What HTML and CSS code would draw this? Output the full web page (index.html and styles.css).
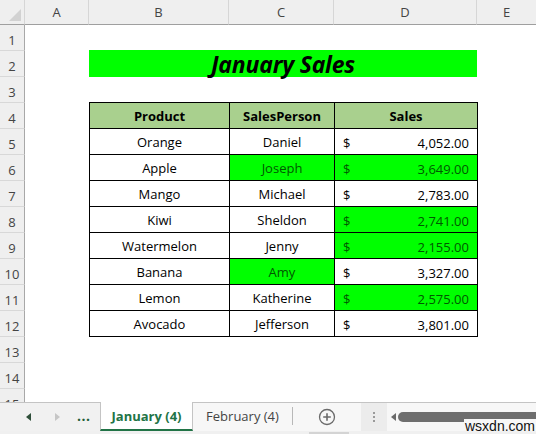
FILE: index.html
```html
<!DOCTYPE html>
<html>
<head>
<meta charset="utf-8">
<link rel="stylesheet" href="styles.css">
</head>
<body>
<div class="app">
  <div class="sheet">
    <div class="corner"><span class="tri"></span></div>
    <div class="colhead">A</div>
    <div class="colhead">B</div>
    <div class="colhead">C</div>
    <div class="colhead">D</div>
    <div class="colhead last">E</div>

    <div class="rowhead r1">1</div>
    <div class="rowhead r2">2</div>
    <div class="rowhead r3">3</div>
    <div class="rowhead r4">4</div>
    <div class="rowhead r5">5</div>
    <div class="rowhead r6">6</div>
    <div class="rowhead r7">7</div>
    <div class="rowhead r8">8</div>
    <div class="rowhead r9">9</div>
    <div class="rowhead r10">10</div>
    <div class="rowhead r11">11</div>
    <div class="rowhead r12">12</div>
    <div class="rowhead r13">13</div>
    <div class="rowhead r14">14</div>
    <div class="rowhead r15">15</div>

    <div class="title">January Sales</div>

    <table class="data">
      <colgroup><col class="cb"><col class="cc"><col class="cd"></colgroup>
      <thead>
        <tr><th>Product</th><th>SalesPerson</th><th>Sales</th></tr>
      </thead>
      <tbody>
        <tr><td>Orange</td><td>Daniel</td><td><div class="money"><span>$</span><span>4,052.00</span></div></td></tr>
        <tr><td>Apple</td><td class="hl">Joseph</td><td class="hl"><div class="money"><span>$</span><span>3,649.00</span></div></td></tr>
        <tr><td>Mango</td><td>Michael</td><td><div class="money"><span>$</span><span>2,783.00</span></div></td></tr>
        <tr><td>Kiwi</td><td>Sheldon</td><td class="hl"><div class="money"><span>$</span><span>2,741.00</span></div></td></tr>
        <tr><td>Watermelon</td><td>Jenny</td><td class="hl"><div class="money"><span>$</span><span>2,155.00</span></div></td></tr>
        <tr><td>Banana</td><td class="hl">Amy</td><td><div class="money"><span>$</span><span>3,327.00</span></div></td></tr>
        <tr><td>Lemon</td><td>Katherine</td><td class="hl"><div class="money"><span>$</span><span>2,575.00</span></div></td></tr>
        <tr><td>Avocado</td><td>Jefferson</td><td><div class="money"><span>$</span><span>3,801.00</span></div></td></tr>
      </tbody>
    </table>
  </div>

  <div class="tabbar">
    <div class="nav">
      <span class="arrow-left"></span>
      <span class="arrow-right"></span>
      <span class="dots">...</span>
    </div>
    <div class="tab active">January (4)</div>
    <div class="tab">February (4)</div>
    <div class="sep"></div>
    <div class="add">
      <svg width="18" height="18" viewBox="0 0 18 18"><circle cx="9" cy="9" r="7.5" fill="none" stroke="#6a6a6a" stroke-width="1.3"/><path d="M9 5.2v7.6M5.2 9h7.6" stroke="#6a6a6a" stroke-width="1.6"/></svg>
    </div>
    <div class="grip"><span></span><span></span><span></span></div>
    <div class="hscroll">
      <span class="sarrow"></span>
      <span class="thumb"></span>
    </div>
    <div class="watermark">wsxdn.com</div>
  </div>
  <div class="bottomstrip"><span class="seg"></span></div>
</div>
</body>
</html>
```

FILE: styles.css
```css
html, body {
  margin: 0;
  padding: 0;
  background: #ffffff;
}

.app {
  width: 536px;
  height: 434px;
  overflow: hidden;
  position: relative;
  font-family: "Open Sans", "Noto Sans", sans-serif;
}

.sheet {
  height: 402px;
  overflow: hidden;
  display: grid;
  grid-template-columns: 25px 64px 140px 105px 143px 59px;
  grid-template-rows: 25px repeat(15, 26px);
  background: #ffffff;
}

.corner {
  grid-column: 1;
  grid-row: 1;
  background: #efefef;
  border-right: 1px solid #d6d6d6;
  border-bottom: 1px solid #9f9f9f;
  position: relative;
}

.tri {
  position: absolute;
  right: 3px;
  bottom: 3px;
  width: 0;
  height: 0;
  border-left: 12px solid transparent;
  border-bottom: 12px solid #d2d2d2;
}

.colhead {
  grid-row: 1;
  background: #efefef;
  border-right: 1px solid #d6d6d6;
  border-bottom: 1px solid #9f9f9f;
  color: #444;
  font-size: 13px;
  display: flex;
  align-items: center;
  justify-content: center;
}

.colhead.last {
  border-right: none;
}

.rowhead {
  grid-column: 1;
  background: #efefef;
  border-right: 1px solid #a8a8a8;
  border-bottom: 1px solid #d8d8d8;
  color: #444;
  font-size: 13px;
  display: flex;
  align-items: center;
  justify-content: center;
  padding-top: 5px;
  box-sizing: border-box;
}

.r1 { grid-row: 2; }
.r2 { grid-row: 3; }
.r3 { grid-row: 4; }
.r4 { grid-row: 5; }
.r5 { grid-row: 6; }
.r6 { grid-row: 7; }
.r7 { grid-row: 8; }
.r8 { grid-row: 9; }
.r9 { grid-row: 10; }
.r10 { grid-row: 11; }
.r11 { grid-row: 12; }
.r12 { grid-row: 13; }
.r13 { grid-row: 14; }
.r14 { grid-row: 15; }
.r15 { grid-row: 16; }

.title {
  grid-column: 3 / 6;
  grid-row: 3;
  background: #00ff00;
  font-family: "Open Sans", sans-serif;
  font-weight: 700;
  font-style: italic;
  font-size: 23px;
  letter-spacing: -0.2px;
  color: #000;
  display: flex;
  align-items: center;
  justify-content: center;
  margin-top: -1px;
  padding-top: 1px;
  box-sizing: border-box;
}

.data {
  grid-column: 3 / 6;
  grid-row: 5 / 14;
  align-self: start;
  margin-top: -1px;
  width: 389px;
  border-collapse: collapse;
  table-layout: fixed;
  font-family: "Open Sans", sans-serif;
  font-size: 13px;
  color: #000;
}

.cb { width: 140px; }
.cc { width: 105px; }
.cd { width: 143px; }

.data th,
.data td {
  border: 1px solid #000;
  height: 26px;
  padding: 0;
  text-align: center;
  vertical-align: middle;
  line-height: 16px;
  box-sizing: border-box;
}

.data th {
  background: #a9d08e;
  font-weight: 700;
}

.data td.hl {
  background: #00ff00;
  color: #005800;
}

.money {
  display: flex;
  justify-content: space-between;
  padding: 2px 8px 0 8px;
}

.tabbar {
  height: 28px;
  display: flex;
  align-items: stretch;
  background: #f7f7f7;
  border-top: 1px solid #c4c4c4;
  position: relative;
  font-family: "Open Sans", sans-serif;
  font-size: 13px;
}

.nav {
  width: 100px;
  display: flex;
  align-items: center;
  background: #f1f1f1;
  position: relative;
}

.arrow-left {
  margin-left: 26px;
  width: 0;
  height: 0;
  border-top: 4px solid transparent;
  border-bottom: 4px solid transparent;
  border-right: 5px solid #2f4f3a;
}

.arrow-right {
  margin-left: 24px;
  width: 0;
  height: 0;
  border-top: 4px solid transparent;
  border-bottom: 4px solid transparent;
  border-left: 5px solid #c6c6c6;
}

.dots {
  margin-left: 17px;
  font-weight: 700;
  color: #1f5e38;
  font-size: 14px;
  letter-spacing: 0.5px;
  padding-bottom: 4px;
}

.tab {
  width: 93px;
  display: flex;
  align-items: center;
  justify-content: center;
  color: #444;
  box-sizing: border-box;
  padding-bottom: 2px;
}

.tab.active {
  background: #ffffff;
  color: #217346;
  font-weight: 700;
  border-left: 1px solid #c4c4c4;
  border-right: 1px solid #c4c4c4;
  border-bottom: 2px solid #217346;
  margin-top: -1px;
  padding-top: 1px;
  padding-bottom: 0;
}

.tab + .tab {
  width: 99px;
}

.sep {
  width: 1px;
  background: #b8b8b8;
  margin: 4px 0 6px 0;
}

.add {
  width: 68px;
  display: flex;
  align-items: center;
  justify-content: center;
}

.grip {
  width: 26px;
  background: #ececec;
  display: flex;
  flex-direction: column;
  align-items: center;
  justify-content: center;
  gap: 2px;
}

.grip span {
  width: 2px;
  height: 2px;
  background: #9a9a9a;
}

.hscroll {
  flex: 1;
  display: flex;
  align-items: center;
  padding-left: 4px;
}

.sarrow {
  width: 0;
  height: 0;
  border-top: 4px solid transparent;
  border-bottom: 4px solid transparent;
  border-right: 5px solid #6a6a6a;
}

.thumb {
  flex: 1;
  height: 10px;
  margin-left: 2px;
  background: #6e6e6e;
  border-radius: 5px 0 0 5px;
}

.watermark {
  position: absolute;
  left: 464px;
  top: 16px;
  font-family: "Liberation Sans", Arial, sans-serif;
  font-size: 14px;
  color: #111;
  background: #f7f7f7;
  line-height: 14px;
  padding: 0 1px;
}

.bottomstrip {
  height: 5px;
  background: #f0f0f0;
  position: relative;
}

.seg {
  position: absolute;
  left: 309px;
  top: 1px;
  width: 40px;
  height: 4px;
  background: #d4d4d4;
}
```
